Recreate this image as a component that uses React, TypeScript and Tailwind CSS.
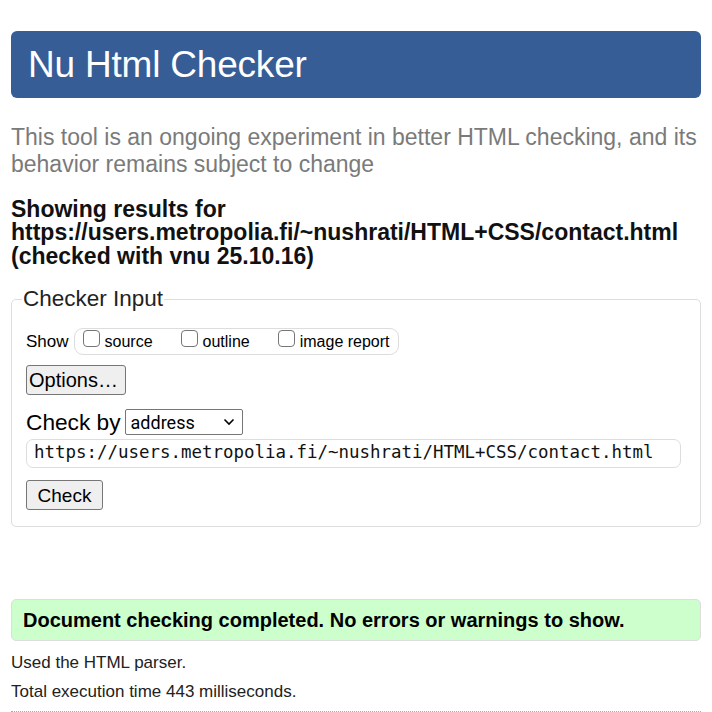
import React from "react";

function Box() {
  return (
    <span className="inline-block w-[17px] h-[17px] border border-[#767676] rounded-[4px] bg-white mr-[5px] translate-y-[-3px]"></span>
  );
}

export default function App() {
  return (
    <div className="w-[712px] h-[712px] bg-white overflow-hidden font-['Liberation_Sans',Arial,sans-serif] text-black">
      <div className="px-[11px] pt-[31px]">
        <div className="h-[67px] bg-[#365d95] rounded-[6px] flex items-center pl-[17px]">
          <h1 className="text-white text-[37px] leading-none tracking-[-0.2px]">Nu Html Checker</h1>
        </div>
        <p className="mt-[26px] text-[23px] leading-[27px] text-[#7a7a7a]">
          This tool is an ongoing experiment in better HTML checking, and its behavior remains subject to change
        </p>
        <div className="mt-[19.5px] font-bold text-[23px] leading-[23.5px] text-[#111]">
          <div>Showing results for</div>
          <div>https://users.metropolia.fi/~nushrati/HTML+CSS/contact.html</div>
          <div>(checked with vnu 25.10.16)</div>
        </div>
        <fieldset className="mt-[18px] border border-[#dddddd] rounded-[5px] px-[14px] pb-[16px]">
          <legend className="text-[22.5px] leading-[26px] px-[1px] ml-[-4px] text-[#222]">Checker Input</legend>
          <div className="flex items-center mt-[16px]">
            <span className="text-[17px] mr-[5px]">Show</span>
            <div className="flex items-center border border-[#dddddd] rounded-[9px] h-[27px] pl-[8px] pr-[8px] text-[16px]">
              <label className="flex items-center"><Box />source</label>
              <label className="flex items-center ml-[28px]"><Box />outline</label>
              <label className="flex items-center ml-[28px]"><Box />image report</label>
            </div>
          </div>
          <button className="mt-[10px] block h-[30px] w-[100px] bg-[#efefef] border border-[#767676] rounded-[3px] text-[20px] text-left pl-[2px] leading-none">Options…</button>
          <div className="flex items-center mt-[14px] h-[26px]">
            <span className="text-[22.7px] mr-[4px]">Check by</span>
            <div className="h-[26px] w-[118px] border border-[#767676] rounded-[2px] flex items-center justify-between pl-[5px] pr-[7px]">
              <span className="font-['Roboto',sans-serif] text-[18px]">address</span>
              <svg width="12" height="8" viewBox="0 0 12 8"><path d="M1.5 1.5 L6 6 L10.5 1.5" fill="none" stroke="#000" strokeWidth="1.6" /></svg>
            </div>
          </div>
          <div className="mt-[3.5px] h-[29px] w-[655px] border border-[#dddddd] rounded-[7px] flex items-center pl-[7px] font-['DejaVu_Sans_Mono',monospace] text-[17.45px] leading-none text-[#111]">
            https://users.metropolia.fi/~nushrati/HTML+CSS/contact.html
          </div>
          <button className="mt-[12.5px] block h-[30px] w-[77px] bg-[#efefef] border border-[#767676] rounded-[3px] text-[19px] leading-none">Check</button>
        </fieldset>
        <div className="mt-[72px] h-[42px] bg-[#ccffcc] border border-[#dddddd] rounded-[5px] flex items-center pl-[11px] font-bold text-[20px]">
          Document checking completed. No errors or warnings to show.
        </div>
        <p className="mt-[12px] text-[17px] leading-[20px] text-[#222]">Used the HTML parser.</p>
        <p className="mt-[9px] text-[17px] leading-[20px] text-[#222]">Total execution time 443 milliseconds.</p>
        <div className="mt-[9px] border-t border-dotted border-[#aaaaaa]"></div>
      </div>
    </div>
  );
}
